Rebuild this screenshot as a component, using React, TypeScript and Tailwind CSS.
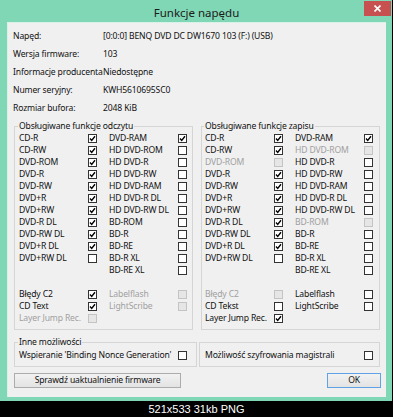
type St = "on" | "off" | "dis";

const UI = "font-['Noto_Sans',sans-serif]";

function Box({ s }: { s: St }) {
  if (s === "dis") {
    return <span className="block w-[9px] h-[9px] shrink-0 border border-[#c4c4c4] bg-[#e6e6e6]" />;
  }
  return (
    <span className="flex w-[9px] h-[9px] shrink-0 items-center justify-center border border-[#333333] bg-white">
      {s === "on" && (
        <svg width="7" height="7" viewBox="0 0 7 7">
          <path d="M1 3.6 L2.7 5.4 L6 1.2" fill="none" stroke="#000" strokeWidth="1.4" />
        </svg>
      )}
    </span>
  );
}

type Item = [string, St, boolean?];

function Row({ item }: { item: Item }) {
  const [label, s, gray] = item;
  return (
    <div className="flex h-[12px] items-center">
      <span className={`w-[69px] whitespace-nowrap ${gray ? "text-[#a0a0a0]" : ""}`}>{label}</span>
      <Box s={s} />
    </div>
  );
}

function Col({ items }: { items: Item[] }) {
  return (
    <div className="flex flex-col">
      {items.map((it, i) => (
        <Row key={i} item={it} />
      ))}
    </div>
  );
}

const col2Labels = [
  "DVD-RAM",
  "HD DVD-ROM",
  "HD DVD-R",
  "HD DVD-RW",
  "HD DVD-RAM",
  "HD DVD-R DL",
  "HD DVD-RW DL",
  "BD-ROM",
  "BD-R",
  "BD-RE",
  "BD-R XL",
  "BD-RE XL",
];

const col1Labels = [
  "CD-R",
  "CD-RW",
  "DVD-ROM",
  "DVD-R",
  "DVD-RW",
  "DVD+R",
  "DVD+RW",
  "DVD-R DL",
  "DVD-RW DL",
  "DVD+R DL",
  "DVD+RW DL",
];

const read = {
  a: col1Labels.map((l, i): Item => [l, i === 10 ? "off" : "on"]),
  b: col2Labels.map((l, i): Item => [l, i === 0 ? "on" : "off"]),
  c: [
    ["Błędy C2", "on"],
    ["CD Text", "on"],
    ["Layer Jump Rec.", "dis", true],
  ] as Item[],
  d: [
    ["Labelflash", "dis", true],
    ["LightScribe", "dis", true],
  ] as Item[],
};

const write = {
  a: col1Labels.map((l, i): Item => (i === 2 ? [l, "dis", true] : [l, i === 10 ? "off" : "on"])),
  b: col2Labels.map((l, i): Item =>
    i === 1 || i === 7 ? [l, "dis", true] : [l, i === 0 ? "on" : "off"]
  ),
  c: [
    ["Błędy C2", "dis", true],
    ["CD Tekst", "off"],
    ["Layer Jump Rec.", "on"],
  ] as Item[],
  d: [
    ["Labelflash", "off"],
    ["LightScribe", "off"],
  ] as Item[],
};

function Group({ title, data, pl }: { title: string; data: typeof read; pl: string }) {
  return (
    <fieldset className={`w-[179px] border border-[#d5d5d5] ${pl} pb-[5px]`}>
      <legend className="px-[1px] -ml-[1px] leading-[11px]">{title}</legend>
      <div className="flex gap-[12px]">
        <Col items={data.a} />
        <Col items={data.b} />
      </div>
      <div className="flex gap-[12px] mt-[12px]">
        <Col items={data.c} />
        <Col items={data.d} />
      </div>
    </fieldset>
  );
}

const info = [
  ["Napęd:", "[0:0:0] BENQ DVD DC DW1670 103 (F:) (USB)"],
  ["Wersja firmware:", "103"],
  ["Informacje producenta", "Niedostępne"],
  ["Numer seryjny:", "KWH5610695SC0"],
  ["Rozmiar bufora:", "2048 KiB"],
];

export default function App() {
  return (
    <div className={`w-[393px] h-[417px] bg-black flex flex-col ${UI}`}>
      <div className="w-[392px] h-[401px] bg-[#80d7b5] flex flex-col pl-[7px] pr-[6px] pb-[4px]">
        <div className="relative h-[22px] flex items-center justify-center pt-[3px]">
          <span className="text-[11.5px] text-[#1b1b1b]">Funkcje napędu</span>
          <div className="absolute right-[-5px] top-[1px] w-[27px] h-[15px] bg-[#c75050] flex items-center justify-center">
            <svg width="7" height="7" viewBox="0 0 7 7">
              <path d="M0.5 0.5 L6.5 6.5 M6.5 0.5 L0.5 6.5" stroke="#fff" strokeWidth="1.6" />
            </svg>
          </div>
        </div>

        <div className="flex-1 bg-[#f0f0f0] border-t border-l border-[#d9f2e8] pl-[6px] pr-[4px] pt-[4px] text-[8.6px] tracking-[-0.15px] text-[#111]">
          <div className="flex flex-col -ml-[1px]">
            {info.map(([k, v]) => (
              <div key={k} className="flex h-[18px] items-center">
                <span className="w-[90px] whitespace-nowrap">{k}</span>
                <span className="whitespace-nowrap">{v}</span>
              </div>
            ))}
          </div>

          <div className="flex gap-[8px] mt-[4px]">
            <Group title="Obsługiwane funkcje odczytu" data={read} pl="pl-[4px]" />
            <Group title="Obsługiwane funkcje zapisu" data={write} pl="pl-[3px]" />
          </div>

          <div className="flex items-start gap-[2px] mt-[6px]">
            <fieldset className="w-[183px] border border-[#d5d5d5] pl-[4px] pb-[5px]">
              <legend className="px-[1px] -ml-[1px] leading-[12px]">Inne możliwości</legend>
              <div className="flex h-[12px] items-center mt-[1px]">
                <span className="w-[159px] whitespace-nowrap">Wspieranie 'Binding Nonce Generation'</span>
                <Box s="off" />
              </div>
            </fieldset>
            <div className="w-[181px] mt-[6px] border border-[#d5d5d5] pl-[5px] pt-[6px] pb-[5px]">
              <div className="flex h-[12px] items-center">
                <span className="w-[159px] whitespace-nowrap">Możliwość szyfrowania magistrali</span>
                <Box s="off" />
              </div>
            </div>
          </div>

          <div className="flex justify-between mt-[6px] pr-[1px]">
            <button className="w-[167px] h-[15px] border border-[#acacac] bg-gradient-to-b from-[#f2f2f2] to-[#e3e3e3] leading-[13px]">
              Sprawdź uaktualnienie firmware
            </button>
            <button className="w-[54px] h-[15px] border border-[#5fa2e6] bg-gradient-to-b from-[#f2f2f2] to-[#e3e3e3] leading-[13px]">
              OK
            </button>
          </div>
        </div>
      </div>
      <div className="flex-1 flex items-center justify-center font-['Liberation_Sans',sans-serif] text-[11px] text-white">
        521x533 31kb PNG
      </div>
    </div>
  );
}
